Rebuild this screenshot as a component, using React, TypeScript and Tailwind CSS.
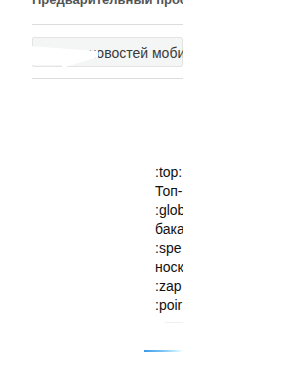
export default function App() {
  const items = [':top:', 'Топ-', ':glob', 'бака', ':spe', 'носк', ':zap', ':poir'];
  return (
    <div className="w-[295px] h-[365px] bg-white overflow-hidden" style={{ fontFamily: '"Liberation Sans", Arial, sans-serif' }}>
      <div className="w-[183px] overflow-hidden">
        <div className="pl-[32px]">
          <div className="-mt-[9px] h-[33px] text-[13px] leading-[18px] font-bold text-[#555] whitespace-nowrap">
            Предварительный просмотр
          </div>
          <div className="border-t border-[#dcdcdc]" />
          <div className="relative mt-[12px] h-[30px] border border-[#e3e3e3] bg-[#f4f5f5] rounded-[2px] whitespace-nowrap text-[14px] text-[#3a3a3a] leading-[30px] pl-[13px]">
            Лента новостей мобильных
            <svg className="absolute left-[-5px] top-[-1px]" width="75" height="33" viewBox="0 0 75 33">
              <polygon points="0,9 70,14 70,20 34,31 34,28 0,28" fill="#fff" />
            </svg>
          </div>
          <div className="mt-[11px] border-t border-[#dcdcdc]" />
        </div>
        <div className="pt-[84px] pl-[155px] text-[14px] leading-[19px] text-[#111] whitespace-nowrap">
          {items.map((t) => (
            <div key={t}>{t}</div>
          ))}
        </div>
        <div className="ml-[165px] mt-[7px] h-px w-[18px] bg-[#f0f0f0]" />
        <div className="ml-[144px] mt-[27px] h-[2px] w-[38px] bg-gradient-to-r from-[#3a9be6] via-[#7cc4f4] to-[#e8ffff]" />
      </div>
    </div>
  );
}
